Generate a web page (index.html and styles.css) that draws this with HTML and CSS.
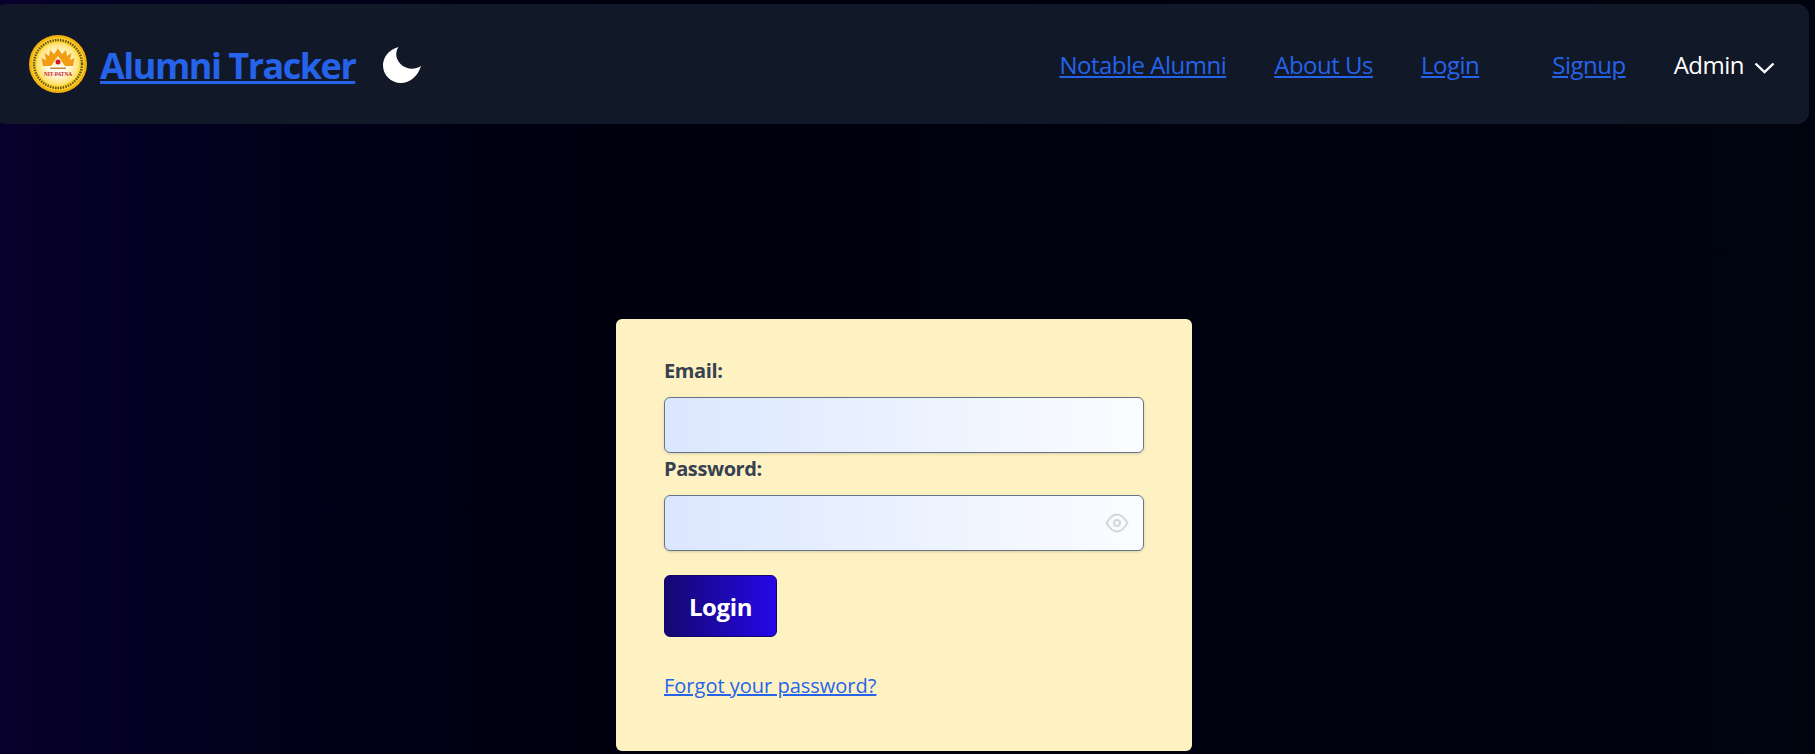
FILE: index.html
```html
<!DOCTYPE html>
<html lang="en">
<head>
    <meta charset="UTF-8">
    <meta name="viewport" content="width=device-width, initial-scale=1.0">
    <title>Alumni Tracker</title>
    <link rel="stylesheet" href="styles.css">
</head>
<body>
    <nav class="navbar">
        <div class="nav-left">
            <svg class="logo" viewBox="0 0 58 58" aria-hidden="true">
                <defs>
                    <radialGradient id="logoGlow">
                        <stop offset="0.45" stop-color="#fffdf0"/>
                        <stop offset="1" stop-color="#ffe06a"/>
                    </radialGradient>
                </defs>
                <circle cx="29" cy="29" r="29" fill="#f2b310"/>
                <circle cx="29" cy="29" r="26.500" fill="#fcd22e"/>
                <circle cx="29" cy="29" r="24" fill="none" stroke="#6b5212" stroke-width="2.500" stroke-dasharray="1.500 1.100"/>
                <circle cx="29" cy="29" r="21.500" fill="url(#logoGlow)"/>
                <path d="M14 31L12.500 23L17 25L15.500 18L20 21L21 15L25 19L29 13.500L33 19L37 15L38 21L42.500 18L41 25L45.500 23L44 31Z" fill="#f49c12"/>
                <path d="M22 31L29 21L36 31Z" fill="#fff8d8"/>
                <circle cx="29" cy="27" r="2.500" fill="#d8141c"/>
                <rect x="21" y="32.500" width="16" height="1.500" fill="#b98a3a"/>
                <text class="logo-text" x="29" y="41" text-anchor="middle" textLength="28" lengthAdjust="spacingAndGlyphs">NIT-PATNA</text>
            </svg>
            <a href="#" class="brand">Alumni Tracker</a>
            <svg class="moon" viewBox="0 0 38 38" aria-hidden="true">
                <path d="M15.500 1C6 3.500 0 11 0 19.500C0 29 8 37 18 37C27 37 35 30 38 20C33 23 28 23.500 23 21.500C14 18 10.500 8 15.500 1Z" fill="#fff"/>
            </svg>
        </div>
        <div class="nav-right">
            <a href="#" class="nav-link">Notable Alumni</a>
            <a href="#" class="nav-link">About Us</a>
            <a href="#" class="nav-link nav-link-login">Login</a>
            <a href="#" class="nav-link">Signup</a>
            <div class="admin">
                <span>Admin</span>
                <svg class="chevron" viewBox="0 0 21 12" aria-hidden="true">
                    <path d="M1.500 1.500L10.500 10L19.500 1.500" fill="none" stroke="#fff" stroke-width="2.400"/>
                </svg>
            </div>
        </div>
    </nav>

    <main class="content">
        <form class="login-card" onsubmit="event.preventDefault();">
            <label for="email">Email:</label>
            <input type="email" id="email" class="field">

            <label for="password" class="label-password">Password:</label>
            <div class="password-wrap">
                <input type="password" id="password" class="field">
                <svg class="eye" viewBox="0 0 24 24" aria-hidden="true">
                    <path d="M1.500 12C4.500 7 8 3.500 12 3.500S19.500 7 22.500 12C19.500 17 16 20.500 12 20.500S4.500 17 1.500 12Z" fill="none" stroke="#d4d6da" stroke-width="2"/>
                    <circle cx="12" cy="12" r="3" fill="none" stroke="#d4d6da" stroke-width="2"/>
                </svg>
            </div>

            <button type="submit" class="login-btn">Login</button>

            <a href="#" class="forgot">Forgot your password?</a>
        </form>
    </main>
</body>
</html>
```

FILE: styles.css
```css
* {
    box-sizing: border-box;
}
body {
    margin: 0;
    height: 754px;
    overflow: hidden;
    font-family: "Open Sans", "Noto Sans", sans-serif;
    background: linear-gradient(to right, #07002c 0%, #030020 10%, #020018 17%, #00000f 33%, #00040f 100%);
    padding: 4px 6px 0 0;
}
.navbar {
    height: 120px;
    margin-left: -6px;
    background-color: #111827;
    border-radius: 12px;
    display: flex;
    align-items: center;
    justify-content: space-between;
    padding: 0 34px 0 35px;
}
.nav-left {
    display: flex;
    align-items: center;
}
.logo {
    width: 58px;
    height: 58px;
}
.logo-text {
    font-family: "Liberation Serif", serif;
    font-size: 6.500px;
    font-weight: 700;
    fill: #c8141c;
}
.brand {
    margin-left: 13px;
    padding-top: 2px;
    font-size: 36px;
    font-weight: 700;
    letter-spacing: -1.500px;
    color: #2563eb;
}
.moon {
    margin-left: 28px;
    margin-top: 2px;
    width: 38px;
    height: 38px;
}
.nav-right {
    display: flex;
    align-items: center;
    gap: 48px;
}
.nav-link {
    font-size: 24px;
    letter-spacing: -0.500px;
    color: #2563eb;
}
.nav-link-login {
    margin-right: 25px;
}
.admin {
    display: flex;
    align-items: center;
    gap: 10px;
    color: #fff;
    font-size: 24px;
    letter-spacing: -0.500px;
}
.chevron {
    width: 21px;
    height: 12px;
    margin-top: 8px;
}
.content {
    display: flex;
    justify-content: center;
    padding: 195px 1px 0 0;
}
.login-card {
    width: 576px;
    height: 432px;
    background-color: #fef2c2;
    border-radius: 6px;
    padding: 38px 48px 0;
    display: flex;
    flex-direction: column;
    align-items: flex-start;
}
label {
    font-size: 20px;
    font-weight: 700;
    letter-spacing: -0.400px;
    line-height: 28px;
    color: #374151;
    margin-bottom: 12px;
}
.label-password {
    margin-top: 2px;
}
.field {
    display: block;
    width: 480px;
    height: 56px;
    border: 1px solid #64748b;
    border-radius: 6px;
    background: linear-gradient(to right, #dbe7ff 0%, #fbfcff 100%);
    box-shadow: 0 1px 3px rgba(0, 0, 0, 0.15);
}
.password-wrap {
    position: relative;
}
.eye {
    position: absolute;
    right: 15px;
    top: 16px;
    width: 24px;
    height: 24px;
}
.login-btn {
    margin-top: 24px;
    width: 113px;
    height: 62px;
    border: 1px solid #10066b;
    border-radius: 6px;
    background: linear-gradient(to right, #150770 0%, #2408e8 100%);
    color: #fff;
    font-family: inherit;
    font-size: 24px;
    font-weight: 700;
    letter-spacing: -0.400px;
}
.forgot {
    margin-top: 35px;
    font-size: 20px;
    color: #2563eb;
}
```
